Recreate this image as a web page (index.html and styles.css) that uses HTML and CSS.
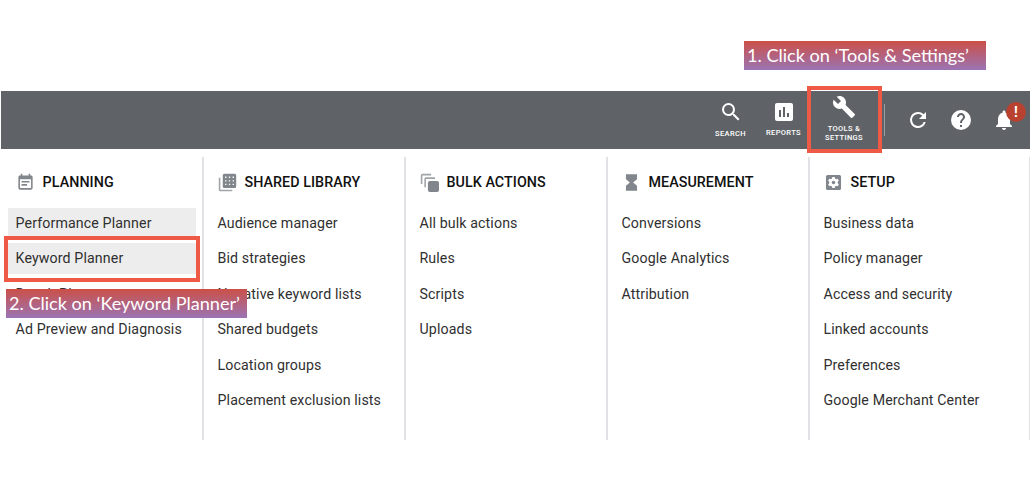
FILE: index.html
```html
<!DOCTYPE html>
<html lang="en">
<head>
<meta charset="utf-8">
<title>Tools &amp; Settings</title>
<link rel="stylesheet" href="styles.css">
</head>
<body>
<header class="bar">
  <a class="tool"><svg viewBox="0 0 24 24"><path d="M15.5 14h-.79l-.28-.27A6.47 6.47 0 0 0 16 9.5 6.5 6.5 0 1 0 9.5 16c1.61 0 3.09-.59 4.23-1.57l.27.28v.79l5 4.99L20.49 19l-4.99-5zm-6 0C7.01 14 5 11.99 5 9.5S7.01 5 9.5 5 14 7.01 14 9.5 11.99 14 9.5 14z"/></svg><span>SEARCH</span></a>
  <a class="tool tool-reports"><svg viewBox="0 0 24 24"><path d="M19 3H5c-1.1 0-2 .9-2 2v14c0 1.1.9 2 2 2h14c1.1 0 2-.9 2-2V5c0-1.1-.9-2-2-2zM9 17H7v-7h2v7zm4 0h-2V7h2v10zm4 0h-2v-4h2v4z"/></svg><span>REPORTS</span></a>
  <a class="tool tool-wide"><svg viewBox="0 0 24 24"><path d="M22.7 19l-9.1-9.1c.9-2.3.4-5-1.500-6.900-2-2-5-2.400-7.400-1.300L9 6 6 9 1.600 4.700C.4 7.100.9 10.100 2.900 12.100c1.900 1.900 4.600 2.400 6.900 1.500l9.100 9.100c.4.4 1 .4 1.400 0l2.300-2.300c.5-.4.5-1.100.1-1.400z"/></svg><span>TOOLS &amp;<br>SETTINGS</span></a>
  <i class="divider"></i>
  <a class="action"><svg viewBox="0 0 24 24"><path d="M17.650 6.350A7.960 7.960 0 0 0 12 4a8 8 0 1 0 7.730 10h-2.080A6 6 0 1 1 12 6c1.660 0 3.140.69 4.220 1.780L13 11h7V4l-2.350 2.350z"/></svg></a>
  <a class="action"><svg viewBox="0 0 24 24"><path d="M12 2a10 10 0 1 0 0 20 10 10 0 0 0 0-20zm1 17h-2v-2h2v2zm2.070-7.750l-.9.92C13.450 12.900 13 13.500 13 15h-2v-.5c0-1.100.450-2.100 1.170-2.830l1.240-1.260c.370-.360.590-.860.590-1.410 0-1.100-.9-2-2-2s-2 .9-2 2H8c0-2.210 1.790-4 4-4s4 1.790 4 4c0 .880-.360 1.680-.930 2.250z"/></svg></a>
  <a class="action"><svg viewBox="0 0 24 24"><path d="M12 22c1.100 0 2-.9 2-2h-4c0 1.100.890 2 2 2zm6-6v-5c0-3.070-1.640-5.640-4.500-6.320V4c0-.830-.670-1.500-1.500-1.500s-1.500.670-1.500 1.500v.680C7.630 5.360 6 7.920 6 11v5l-2 2v1h16v-1l-2-2z"/></svg><b class="badge">!</b></a>
</header>
<main class="menu">
  <section class="column">
    <h2><svg viewBox="0 0 24 24"><path d="M17 10H7v2h10v-2zm2-7h-1V1h-2v2H8V1H6v2H5c-1.110 0-1.990.9-1.990 2L3 19c0 1.100.890 2 2 2h14c1.100 0 2-.9 2-2V5c0-1.100-.9-2-2-2zm0 16H5V8h14v11zm-5-5H7v2h7v-2z"/></svg>PLANNING</h2>
    <ul><li class="shaded">Performance Planner</li><li class="shaded">Keyword Planner</li><li>Reach Planner</li><li>Ad Preview and Diagnosis</li></ul>
  </section>
  <section class="column">
    <h2><svg viewBox="0 0 24 24"><path fill-rule="evenodd" d="M8 1h13a2 2 0 0 1 2 2v14a2 2 0 0 1-2 2H8a2 2 0 0 1-2-2V3c0-1.100.9-2 2-2zM9 4.500v1.700h1.700V4.500zm4.700 0v1.700h1.700V4.500zm4.700 0v1.700h1.700V4.500zM9 9v1.700h1.700V9zm4.700 0v1.700h1.700V9zm4.700 0v1.700h1.700V9zM9 13.500v1.700h1.700v-1.700zm4.700 0v1.700h1.700v-1.700zm4.700 0v1.700h1.700v-1.700z"/><path opacity=".75" d="M1 6h2v15h15v2H3a2 2 0 0 1-2-2z"/></svg>SHARED LIBRARY</h2>
    <ul><li>Audience manager</li><li>Bid strategies</li><li>Negative keyword lists</li><li>Shared budgets</li><li>Location groups</li><li>Placement exclusion lists</li></ul>
  </section>
  <section class="column">
    <h2><svg viewBox="0 0 24 24"><path opacity=".75" d="M1 14V3a2 2 0 0 1 2-2h11v2H3v11zM5.500 18V7.500a2 2 0 0 1 2-2H19v2H7.500V18z"/><rect x="10" y="10" width="14" height="14" rx="2.500"/></svg>BULK ACTIONS</h2>
    <ul><li>All bulk actions</li><li>Rules</li><li>Scripts</li><li>Uploads</li></ul>
  </section>
  <section class="column">
    <h2><svg viewBox="0 0 24 24"><path d="M5 1.500v6.500l5 4-5 4v6.500h14V16l-5-4 5-4V1.500z"/></svg>MEASUREMENT</h2>
    <ul><li>Conversions</li><li>Google Analytics</li><li>Attribution</li></ul>
  </section>
  <section class="column column-last">
    <h2><svg viewBox="0 0 24 24"><rect x="2.500" y="2.500" width="19" height="19" rx="2"/><g class="gear"><path d="M10.500 5h3l.5 3h-4zM10.500 19h3l.5-3h-4z"/><path d="M10.500 5h3l.5 3h-4zM10.500 19h3l.5-3h-4z" transform="rotate(60 12 12)"/><path d="M10.500 5h3l.5 3h-4zM10.500 19h3l.5-3h-4z" transform="rotate(120 12 12)"/><circle cx="12" cy="12" r="5.300"/></g><circle cx="12" cy="12" r="2.200"/></svg>SETUP</h2>
    <ul><li>Business data</li><li>Policy manager</li><li>Access and security</li><li>Linked accounts</li><li>Preferences</li><li>Google Merchant Center</li></ul>
  </section>
</main>
<div class="frame frame-tools"></div>
<div class="frame frame-keyword"></div>
<div class="callout callout-tools"><span>1. Click on ‘Tools &amp; Settings’</span></div>
<div class="callout callout-keyword"><span>2. Click on ‘Keyword Planner’</span></div>
</body>
</html>
```

FILE: styles.css
```css
* { box-sizing: border-box; }
body {
  position: relative;
  margin: 0;
  height: 479px;
  padding-top: 91px;
  overflow: hidden;
  background: #fff;
  font-family: Roboto, sans-serif;
  color: #303030;
}
svg { display: block; flex: none; width: 24px; height: 24px; fill: currentColor; }
.bar {
  display: flex;
  justify-content: flex-end;
  height: 58px;
  margin-left: 1px;
  padding-right: 5px;
  background: #5f6368;
  color: #fff;
}
.tool {
  display: flex;
  flex-direction: column;
  align-items: center;
  width: 53px;
  padding-top: 9px;
}
.tool span {
  margin-top: 5px;
  font-size: 7.5px;
  font-weight: 500;
  line-height: 9px;
  letter-spacing: 0.35px;
  text-align: center;
  white-space: nowrap;
}
.tool-reports span { margin-top: 4px; }
.tool-wide { width: 68px; padding-top: 4px; }
.divider { width: 1px; height: 32px; margin: 13px 11px 0 6px; background: #9b9ea2; }
.action { position: relative; width: 43px; padding: 17px 0 0 9.5px; }
.badge {
  position: absolute;
  left: 24px;
  top: 11px;
  width: 20px;
  height: 20px;
  border-radius: 50%;
  background: #b8412f;
  font-size: 14px;
  line-height: 20px;
  text-align: center;
}
.menu { display: flex; height: 283px; margin-top: 8px; }
.column { width: 202px; padding: 15px 6px 0; border-right: 2px solid #e1e1e6; }
.column:first-child { width: 203.5px; padding-left: 7.6px; }
.column-last { flex: 1; border-right-width: 1px; }
h2 {
  display: flex;
  align-items: center;
  gap: 8px;
  margin: 0;
  height: 20px;
  padding-left: 8px;
  font-size: 14.3px;
  font-weight: 500;
  letter-spacing: 0.05px;
  color: #111;
  white-space: nowrap;
}
h2 svg { width: 19px; height: 19px; color: #80868b; }
.gear { fill: #fff; }
ul {
  display: flex;
  flex-direction: column;
  gap: 4.4px;
  margin: 16px 0 0;
  padding: 0;
  list-style: none;
}
li {
  height: 31px;
  padding-left: 8px;
  font-size: 14.2px;
  line-height: 31px;
  letter-spacing: 0.12px;
  white-space: nowrap;
}
.shaded { background: #ededed; }
.frame { position: absolute; border: 4px solid #ee5a45; }
.frame-tools { left: 807px; top: 86px; width: 75px; height: 67px; }
.frame-keyword { left: 4px; top: 236px; width: 196px; height: 46px; }
.callout {
  position: absolute;
  height: 29px;
  padding-left: 3px;
  background: linear-gradient(#cb5048, #9b74b4);
  color: #fff;
  font: 18.1px/29px Lato, sans-serif;
  white-space: nowrap;
}
.callout-tools { left: 744px; top: 41px; width: 242px; }
.callout-keyword { left: 6px; top: 289px; width: 241px; }
```
